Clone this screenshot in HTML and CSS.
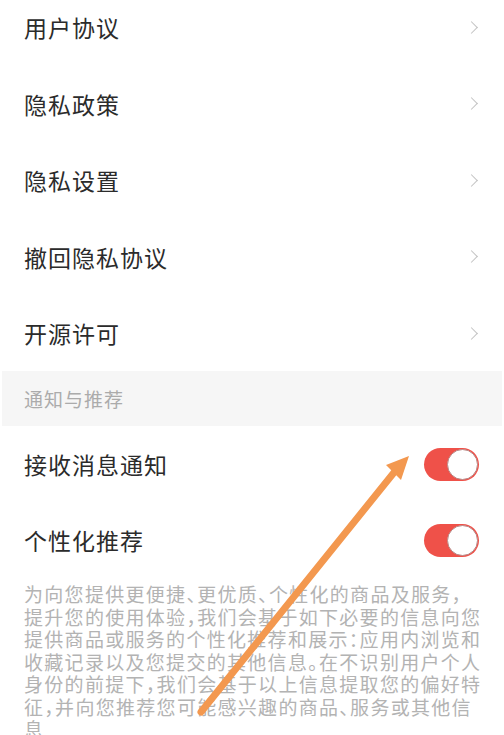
FILE: index.html
```html
<!DOCTYPE html>
<html>

<head>
  <title>隐私设置</title>
  <link rel="stylesheet" href="styles.css">
</head>

<body>
  <div id="settings">
    <div class="menu-list">
      <div class="menu-item"><span>用户协议</span><span class="chevron"></span></div>
      <div class="menu-item"><span>隐私政策</span><span class="chevron"></span></div>
      <div class="menu-item"><span>隐私设置</span><span class="chevron"></span></div>
      <div class="menu-item"><span>撤回隐私协议</span><span class="chevron"></span></div>
      <div class="menu-item"><span>开源许可</span><span class="chevron"></span></div>
    </div>

    <div class="section-title">通知与推荐</div>

    <div class="menu-item"><span>接收消息通知</span><span class="switch on"></span></div>
    <div class="menu-item"><span>个性化推荐</span><span class="switch on"></span></div>

    <p class="notice">为向您提供更便捷、更优质、个性化的商品及服务，<br>提升您的使用体验，我们会基于如下必要的信息向您<br>提供商品或服务的个性化推荐和展示：应用内浏览和<br>收藏记录以及您提交的其他信息。在不识别用户个人<br>身份的前提下，我们会基于以上信息提取您的偏好特<br>征，并向您推荐您可能感兴趣的商品、服务或其他信<br>息</p>
  </div>

  <!-- annotation arrow drawn over the screenshot -->
  <svg class="arrow" width="504" height="735" viewBox="0 0 504 735">
    <line x1="201" y1="712" x2="396" y2="470" stroke="#f3984f" stroke-width="7" stroke-linecap="round"/>
    <polygon points="409,456 386,465 401,480" fill="#f3984f"/>
  </svg>
</body>

</html>
```

FILE: styles.css
```css
body {
  margin: 0;
  background-color: #fff;
  font-family: "Noto Sans CJK SC", "Noto Sans", sans-serif;
  color: #2b2b2b;
  overflow: hidden;
}

#settings {
  width: 504px;
}

.menu-list {
  margin-top: -11px; /* page is scrolled a little */
}

.menu-item {
  display: flex;
  align-items: center;
  justify-content: space-between;
  height: 76px;
  padding: 0 25px 0 24px;
  font-size: 23px;
  letter-spacing: 1px;
}

.menu-list .menu-item:nth-child(2),
.menu-list .menu-item:nth-child(4) {
  height: 77px;
}

.chevron {
  width: 8px;
  height: 8px;
  margin-right: 3px;
  border-top: 1.5px solid #c2c2c2;
  border-right: 1.5px solid #c2c2c2;
  transform: rotate(45deg);
}

.section-title {
  height: 55px;
  margin: 0 2px;
  padding-left: 22px;
  display: flex;
  align-items: center;
  background-color: #f6f6f6;
  color: #ababab;
  font-size: 19px;
  letter-spacing: 1px;
}

.switch {
  position: relative;
  width: 55px;
  height: 33px;
  border-radius: 17px;
  background-color: #ddd;
}

.switch.on {
  background-color: #ef5149;
}

.switch::after {
  content: "";
  position: absolute;
  top: 1px;
  left: 1px;
  width: 29px;
  height: 29px;
  border-radius: 50%;
  background-color: #fff;
  border: 1px solid #b88a88;
}

.switch.on::after {
  left: auto;
  right: 1px;
}

.notice {
  margin: 0;
  padding: 5px 0 0 24px;
  font-size: 19px;
  line-height: 22.5px;
  letter-spacing: 1.3px;
  color: #b3b3b3;
  white-space: nowrap;
  font-feature-settings: "halt";
}

.arrow {
  position: absolute;
  top: 0;
  left: 0;
  pointer-events: none;
}
```
